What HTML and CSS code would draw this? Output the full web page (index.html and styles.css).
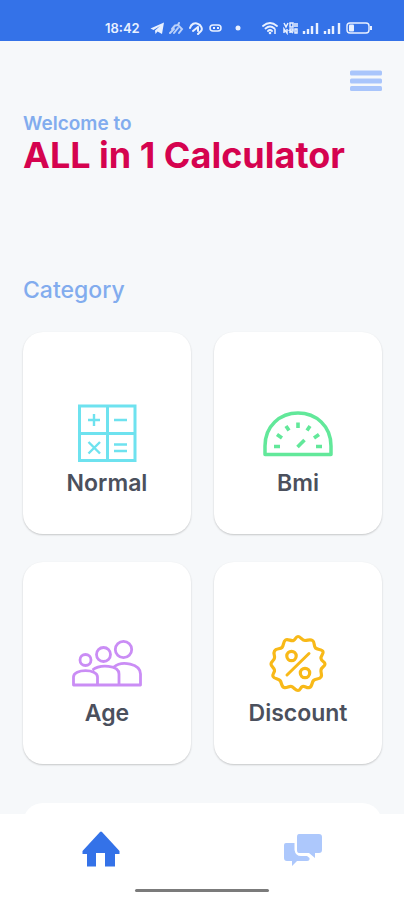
FILE: index.html
```html
<!DOCTYPE html>
<html lang="en">
<head>
<meta charset="utf-8">
<meta name="viewport" content="width=device-width, initial-scale=1">
<title>ALL in 1 Calculator</title>
<link rel="stylesheet" href="styles.css">
</head>
<body>
<div class="app">
  <div class="status">
    <time class="clock">18:42</time>
    <svg class="notices" viewBox="0 0 92 14" fill="none" stroke="currentColor" aria-hidden="true">
      <path d="M.500 7.500 14 1.500 12 13 7.500 10.500 5.500 13 5 9.500 10 5 3.500 9Z" fill="currentColor" stroke="none"/>
      <g opacity=".75" stroke-width="2" stroke-linecap="round"><path d="M20 12 24 8M24 12 28 7M22 8 25 4.500M25 4.500 28 4 32 8 29 12M28 4 29 2"/></g>
      <path d="M40 7C41 3 45 1 48 3 51 4 53 8 51 10L48 13M43 10 48 6M48 6V10" stroke-width="2" stroke-linecap="round"/>
      <rect x="60" y="4" width="11" height="6" rx="3" stroke-width="1.500"/>
      <path d="M63 7H65M67 7H69" stroke-width="2"/>
      <circle cx="88" cy="7" r="2.500" fill="currentColor" stroke="none"/>
    </svg>
    <svg class="signals" viewBox="0 0 110 14" fill="none" stroke="currentColor" aria-hidden="true">
      <path d="M1 5Q8-1 15 5M3.500 7.500Q8 3.500 12.500 7.500M6 10Q8 8 10 10" stroke-width="1.800" stroke-linecap="round"/>
      <circle cx="8" cy="12" r="1.300" fill="currentColor" stroke="none"/>
      <path d="M13 8V13" stroke-width="1.500"/>
      <path d="M22 2 24 6 26 2M28 2H31V6H28ZM33 2V6M35 2V6M22 12V8L25 12V8M28 12V8H31V10H28L31 12M33 8H35V12H33Z" stroke-width="1.500"/>
      <path d="M42 10V13M46 8V13M50 5V13M55 2V13M63 10V13M67 8V13M71 5V13M77 2V13" stroke-width="2.400"/>
      <rect x="85" y="2" width="22" height="10" rx="3" stroke-width="1.400"/>
      <rect x="87" y="3.500" width="5" height="7" rx="1" fill="currentColor" stroke="none"/>
      <path d="M109 5V9" stroke-width="2"/>
    </svg>
  </div>

  <main class="content">
    <header class="top">
      <button class="menu" type="button" aria-label="Menu">
        <svg viewBox="0 0 32 22" fill="currentColor" aria-hidden="true"><rect y=".500" width="32" height="5" rx="1.500"/><rect y="8.500" width="32" height="5" rx="1.500"/><rect y="16" width="32" height="5" rx="1.500"/></svg>
      </button>
    </header>
    <p class="welcome">Welcome to</p>
    <h1 class="title">ALL in 1 Calculator</h1>
    <h2 class="section">Category</h2>

    <div class="grid">
      <a class="card" href="#normal">
        <svg class="icon normal" viewBox="0 0 72 60" aria-hidden="true"><path d="M8.500 2H64V56.500H8.500ZM36.500 2V56.500M8.500 29.500H64" stroke-width="3"/><path d="M17 16H29M23 10V22M43 16H56M17.500 38 29 49.500M29 38 17.500 49.500M43 40.500H56M43 47H56" stroke-width="2.400"/></svg>
        <span>Normal</span>
      </a>
      <a class="card" href="#bmi">
        <svg class="icon bmi" viewBox="0 0 72 60" aria-hidden="true"><path d="M3 50.500V42C3 22 18 9 36 9S69 22 69 42V50.500Z" stroke-width="3.500"/><path d="M12 42.500H18M54 42.500H60M15 30.500 20 34M57 30.500 52 34M24 22 27 26.500M48 22 45 26.500M36 18.500V24M35.500 43 42.500 36" stroke-width="3.600"/></svg>
        <span>Bmi</span>
      </a>
      <a class="card" href="#age">
        <svg class="icon age" viewBox="0 0 72 60" aria-hidden="true"><g stroke-width="2.800"><circle cx="14.500" cy="26" r="5.500"/><circle cx="32.500" cy="20.500" r="7"/><circle cx="52.500" cy="15.500" r="8.200"/><path d="M2.500 51V43C2.500 34.500 26.500 34.500 26.500 43V51ZM21.500 36C29 30 48 31 48 40V51H26.500M43 33C51 26 69.500 30 69.500 40V51H48"/></g></svg>
        <span>Age</span>
      </a>
      <a class="card" href="#discount">
        <svg class="icon discount" viewBox="0 0 72 60" aria-hidden="true"><path d="M36 2.500C38.500 2.500 40 6.500 43 6.500S48 5 50.500 6.500 51.500 12 53.500 14 60 15 61 17.500 58.500 21.500 59 24.500 63 27.500 63 30 59.500 33 59 36 60.500 40.500 59 43 53.500 44.500 51.500 46.500 50.500 52.500 47.500 53.500 43 51.500 40.500 52.500 38.500 56.500 36 56.500 32 53.500 29.500 52.500 25 54.500 22 53.500 20 48.500 18 46.500 12 45 11 42.500 13 38.500 12.500 36 9 32.500 9 30 12 27 12.500 24 11 20 12.500 17 18 15.500 20 13.500 21 7.500 23.500 6 29 7.500 31.500 6.500 33.500 2.500 36 2.500Z" stroke-width="3.200"/><path d="M25 41 47 19.500" stroke-width="3"/><circle cx="29.500" cy="22" r="4.700" stroke-width="3.200"/><circle cx="43" cy="39" r="4.700" stroke-width="3.200"/></svg>
        <span>Discount</span>
      </a>
    </div>
    <div class="card wide"></div>
  </main>

  <nav class="nav" aria-label="Main">
    <div class="tabs">
      <a class="tab active" href="#home" aria-label="Home"><svg viewBox="0 0 38 36" fill="currentColor" aria-hidden="true"><path d="M18 1Q19 0 20 1L37.500 20V23H33V35.500H23V22H14V35.500H5V23H.500V20Z"/></svg></a>
      <a class="tab" href="#chat" aria-label="Messages"><svg viewBox="0 0 38 36" fill="currentColor" aria-hidden="true"><path d="M15 3H35Q38 3 38 6V19Q38 22 35 22H31V27L25 22H15Q13 22 13 19V6Q13 3 15 3Z"/><path d="M2 12H10.500V19Q11.500 25 17 25H23L25.500 27Q26 30 23 30H13L8 35V30H3Q0 30 0 27V14Q0 12 2 12Z"/></svg></a>
    </div>
    <div class="handle"></div>
  </nav>
</div>
</body>
</html>
```
FILE: styles.css
```css
* { box-sizing: border-box; }

body {
  margin: 0;
  background: #f6f8fa;
  font-family: Inter, "Liberation Sans", sans-serif;
}

.app {
  display: flex;
  flex-direction: column;
  height: 100vh;
}

.status {
  display: flex;
  flex: none;
  align-items: center;
  height: 41px;
  padding: 14px 32px 0 105px;
  background: #3472e8;
  color: #e8f0ff;
}

.clock {
  font-size: 13px;
  font-weight: 600;
  line-height: 26px;
}

.notices {
  width: 92px;
  height: 14px;
  margin-left: 10px;
}

.signals {
  width: 110px;
  height: 14px;
  margin-left: auto;
}

.content {
  flex: 1;
  min-height: 0;
  overflow: hidden;
  padding: 29px 22px 0 23px;
}

.top {
  display: flex;
  justify-content: flex-end;
}

.menu {
  padding: 0;
  border: 0;
  background: none;
  color: #a9c5fb;
}

.menu svg {
  display: block;
  width: 32px;
  height: 22px;
}

.welcome {
  margin: 20px 0 0;
  color: #82acee;
  font-size: 19px;
  font-weight: 600;
  line-height: 23px;
}

.title {
  margin: 0;
  color: #d5034f;
  font-size: 36px;
  font-weight: 700;
  line-height: 41px;
  white-space: nowrap;
}

.section {
  margin: 100px 0 28px;
  color: #82acee;
  font-size: 23px;
  font-weight: 500;
  line-height: 28px;
}

.grid {
  display: grid;
  grid-template-columns: 1fr 1fr;
  gap: 28px 23px;
}

.card {
  display: flex;
  flex-direction: column;
  align-items: center;
  gap: 5px;
  min-height: 202px;
  padding: 72px 8px 37px;
  border-radius: 20px;
  background: #fff;
  box-shadow: 0 1px 2px rgba(0, 0, 0, .2);
  color: #4b505d;
  font-size: 23px;
  font-weight: 600;
  line-height: 28px;
  text-decoration: none;
}

.wide {
  margin-top: 39px;
  box-shadow: none;
}

.icon {
  width: 72px;
  height: 60px;
  fill: none;
  stroke: currentColor;
  stroke-linejoin: round;
}

.normal { color: #6ee2ef; stroke-linejoin: miter; }
.bmi { color: #62e89a; }
.age { color: #ca8df5; }
.discount { color: #f8b918; stroke-linecap: round; }

.nav {
  flex: none;
  padding: 17px 0 8px;
  background: #fff;
}

.tabs {
  display: flex;
}

.tab {
  display: flex;
  flex: 1;
  justify-content: center;
  color: #adc8fc;
}

.active { color: #3472e8; }

.tab svg {
  width: 38px;
  height: 36px;
}

.handle {
  width: 33%;
  height: 3px;
  margin: 22px auto 0;
  border-radius: 2px;
  background: #7b7b7b;
}
```
